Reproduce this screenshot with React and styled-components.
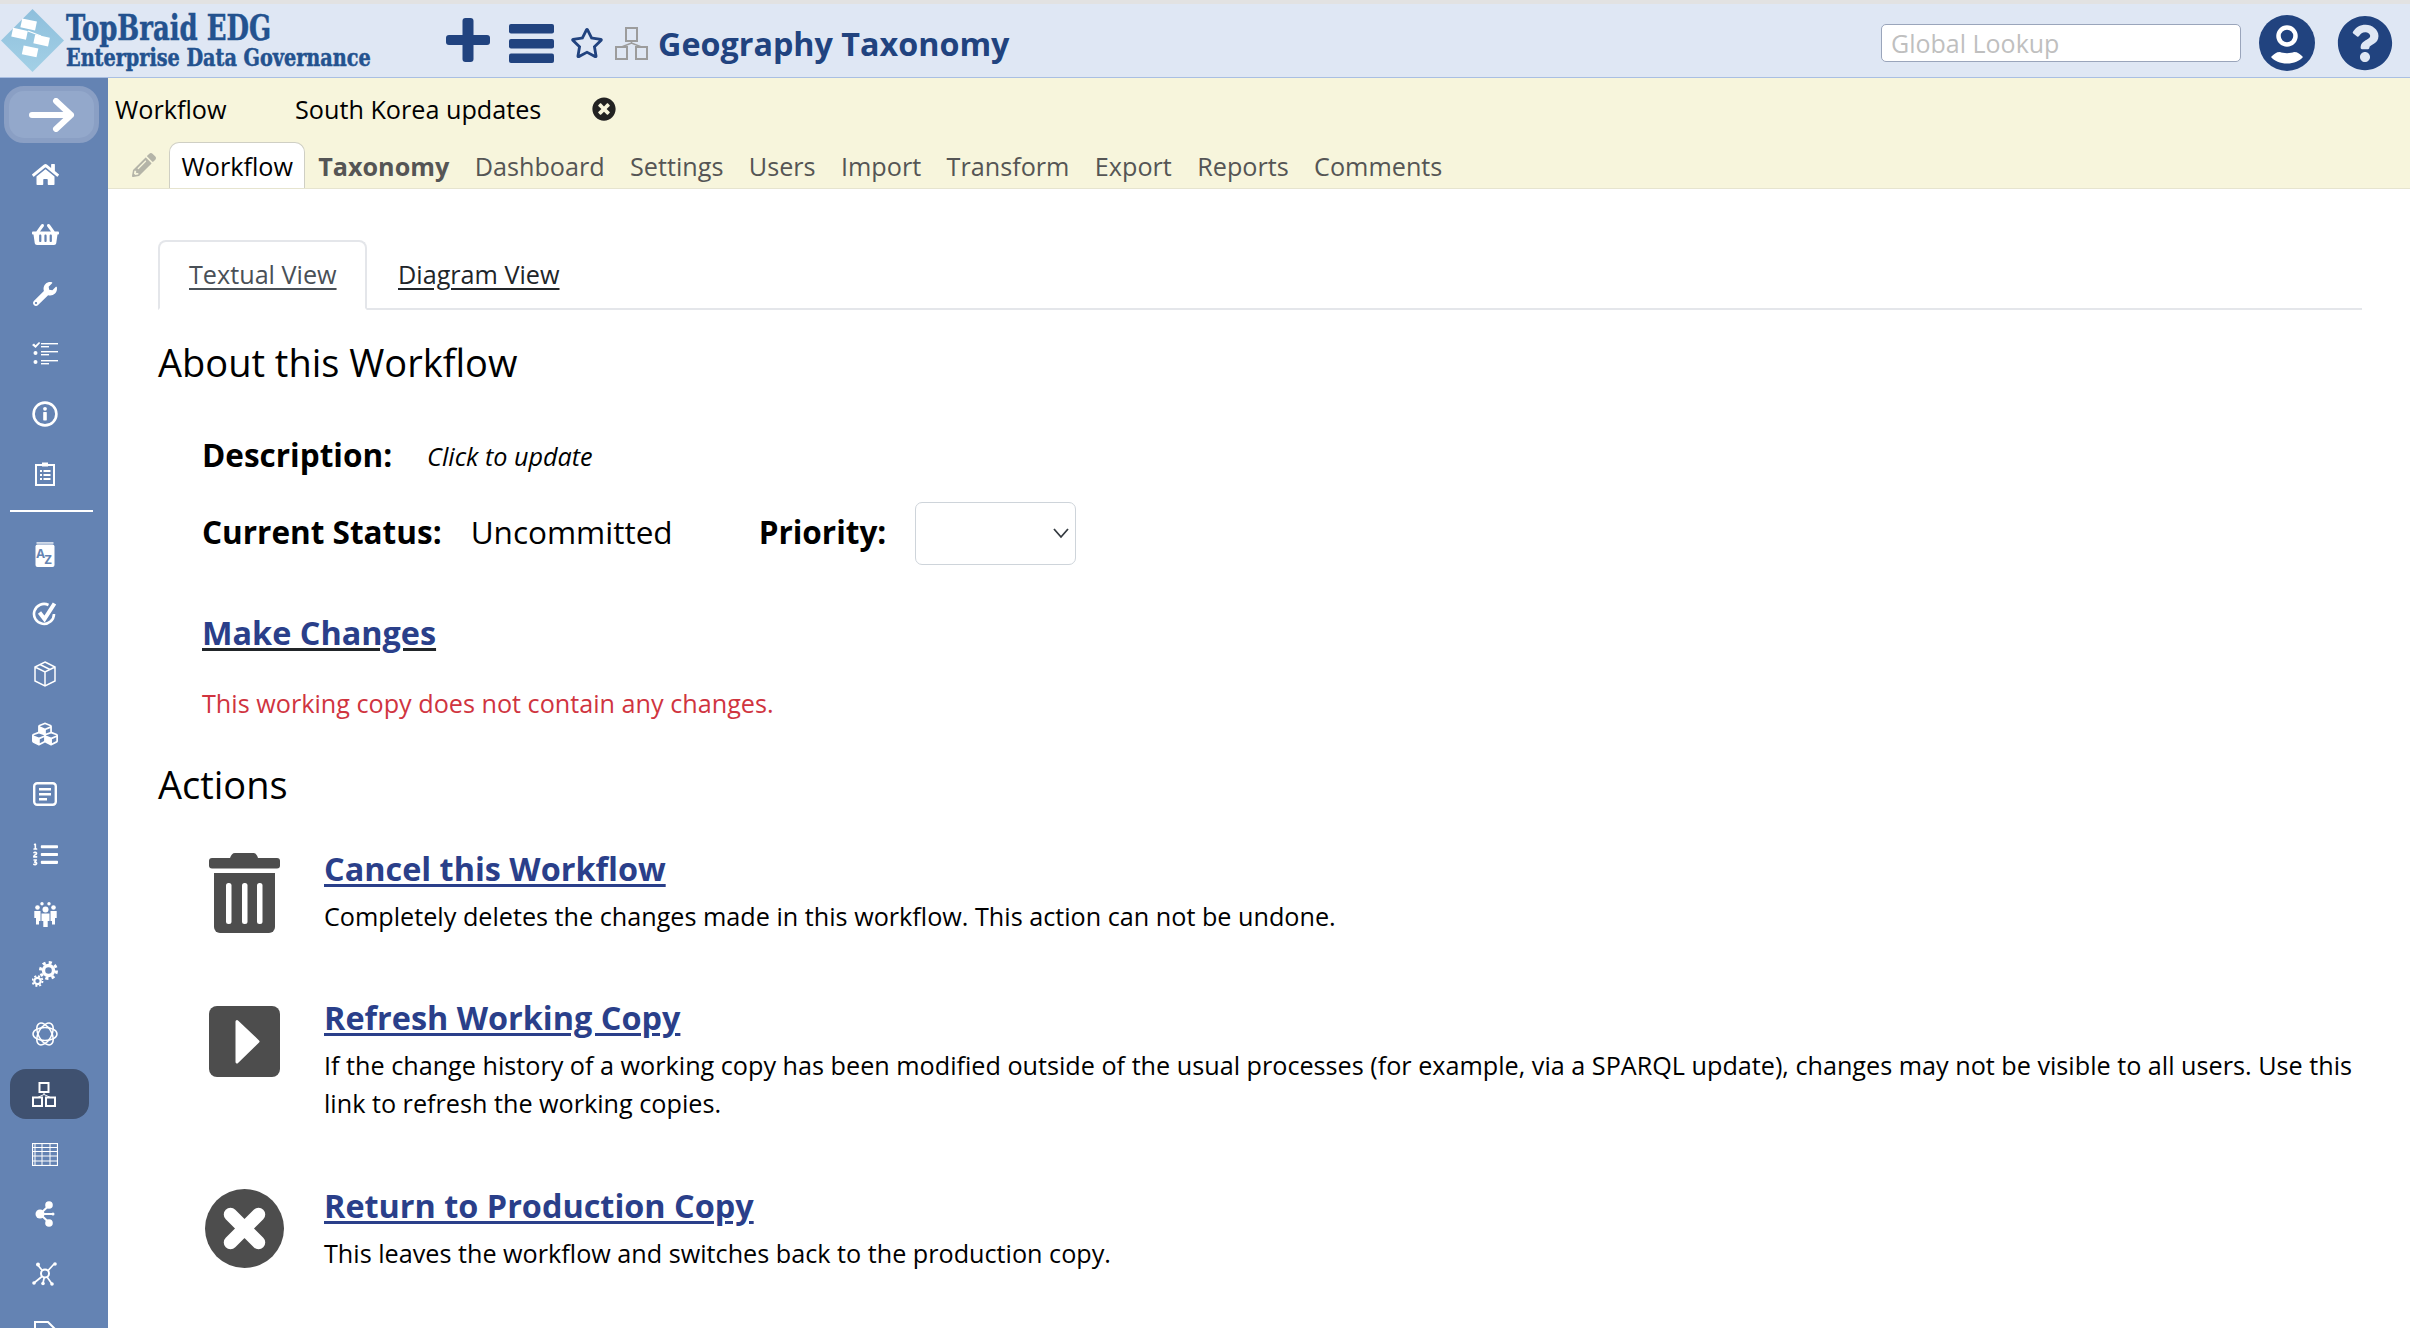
import React from 'react';
import styled, { createGlobalStyle } from 'styled-components';
import { FaHome, FaShoppingBasket, FaWrench, FaCubes, FaListOl, FaRegStar, FaQuestionCircle, FaPencilAlt, FaTimesCircle } from 'react-icons/fa';

const NAVY = '#21437f';

const Global = createGlobalStyle`
  html, body { margin: 0; padding: 0; height: 1328px; overflow: hidden; background: #fff; }
  body { font-family: "Open Sans", "Noto Sans", sans-serif; color: #000; }
  * { box-sizing: border-box; }
`;

const Page = styled.div`
  width: 2410px; height: 1328px; display: flex; flex-direction: column; overflow: hidden;
`;
const TopStrip = styled.div`height: 4px; background: #e2e2e2; flex: none;`;
const Header = styled.header`
  height: 74px; flex: none; display: flex; align-items: center; background: #dfe7f4;
  border-bottom: 1px solid #a9bfe2; padding: 5px 17px 0 1px;
`;
const Logo = styled.div`
  display: flex; align-items: center; width: 445px; flex: none; gap: 2px; margin-top: -5px;
`;
const LogoText = styled.div`
  display: flex; flex-direction: column; font-family: "DejaVu Serif", serif; font-weight: 700; font-stretch: condensed;
  color: #23528f; -webkit-text-stroke: 0.5px #23528f; margin-top: -2px;
`;
const LogoTop = styled.span`font-size: 36px; line-height: 37px; transform-origin: left; transform: scaleX(0.8); white-space: nowrap;`;
const LogoBottom = styled.span`font-size: 24px; line-height: 24px; transform-origin: left; transform: scaleX(0.89); white-space: nowrap;`;
const HeaderTools = styled.div`display: flex; align-items: center;`;
const ToolIcon = styled.span`display: flex; margin: ${p => p.$mt || 0}px ${p => p.$mr}px 0 0; color: ${p => p.$c || NAVY};`;
const Title = styled.h1`
  margin: 0 0 0 10px; font-size: 32.3px; line-height: 44px; font-weight: 700; color: ${NAVY}; white-space: nowrap;
`;
const Spacer = styled.div`flex: 1;`;
const Lookup = styled.input`
  width: 360px; height: 38px; border: 1px solid #9aa5bb; border-radius: 5px; background: #fff;
  font-family: inherit; font-size: 25px; padding: 0 9px; margin-right: 18px; outline: none;
  &::placeholder { color: #bfbfbf; opacity: 1; }
`;
const RoundIcon = styled.span`display: flex; margin-left: ${p => p.$ml || 0}px; color: ${NAVY};`;

const Body = styled.div`flex: 1; display: flex; min-height: 0;`;
const Sidebar = styled.nav`
  width: 108px; flex: none; background: #6483b3; overflow: hidden; padding-top: 8px; color: #fff;
`;
const Toggle = styled.div`
  width: 95px; height: 57px; margin: 0 0 1px 4px; border-radius: 20px; background: #93a8cb; border: 5px solid #8a9fc4;
  display: flex; align-items: center; justify-content: center;
`;
const NavItem = styled.div`
  height: 60px; display: flex; align-items: center; justify-content: center; padding-right: 18px; color: #fff;
`;
const ActiveItem = styled(NavItem)`
  width: 79px; height: 50px; margin: 5px 0 5px 10px; padding: 0 12px 0 0; border-radius: 16px; background: #3f5170;
`;
const NavRule = styled.hr`
  border: 0; height: 2px; background: #fff; margin: 6px 15px 12px 10px;
`;

const Content = styled.div`flex: 1; min-width: 0; display: flex; flex-direction: column;`;
const SubHeader = styled.div`
  height: 111px; flex: none; background: #f7f5dc; border-bottom: 1px solid #e6e4cf; display: flex; flex-direction: column;
`;
const ContextRow = styled.div`
  height: 65px; display: flex; align-items: center; padding: 0 0 3px 7px; font-size: 25.2px;
`;
const ContextName = styled.span`width: 180px;`;
const ContextValue = styled.span`width: 297px;`;
const CloseIcon = styled.span`display: flex; color: #222;`;
const TabRow = styled.div`
  height: 46px; display: flex; align-items: flex-end; padding-left: 24px; font-size: 25.2px; color: #555;
`;
const PencilSlot = styled.span`display: flex; align-self: center; width: 37px; color: #b4b4a8;`;
const ActiveTab = styled.span`
  height: 46px; padding: 0 11.500px; display: flex; align-items: center; color: #000; background: #fff;
  border: 1px solid #cfcfc4; border-bottom: 0; border-radius: 10px 10px 0 0;
`;
const Tab = styled.span`
  height: 45px; padding: 0 12.7px; display: flex; align-items: center; font-weight: ${p => p.$bold ? 700 : 400};
`;

const Main = styled.main`flex: 1; padding: 51px 48px 0 50px; min-height: 0;`;
const ViewTabs = styled.div`display: flex; border-bottom: 2px solid #e4e6ea; height: 70px;`;
const ViewTab = styled.a`
  font-size: 25.2px; height: 70px; display: flex; align-items: center; text-decoration: underline; text-underline-offset: 4px;
  padding: 0 0 3px 29px; color: ${p => p.$active ? '#495057' : '#212529'};
  ${p => p.$active ? 'width: 209px; border: 2px solid #e4e6ea; border-bottom: 2px solid #fff; border-radius: 8px 8px 0 0;' : 'padding-left: 31px;'}
`;
const Heading = styled.h2`
  margin: ${p => p.$mt}px 0 0; font-size: 38px; line-height: 54px; font-weight: 400;
`;
const Details = styled.div`padding-left: ${p => p.$pl}px;`;
const DescRow = styled.div`display: flex; align-items: center; height: 40px; margin-top: 45px;`;
const Label = styled.span`font-size: 31.5px; font-weight: 700; margin-right: ${p => p.$mr}px; white-space: nowrap; position: relative; top: ${p => p.$up ? -2 : 0}px;`;
const Hint = styled.span`font-size: 25.2px; font-style: italic; padding-top: 4px;`;
const StatusRow = styled.div`display: flex; align-items: center; height: 63px; margin-top: 28px;`;
const StatusValue = styled.span`font-size: 31.5px; margin-right: 86px; position: relative; top: -2px;`;
const SelectWrap = styled.span`position: relative; display: block; width: 161px; height: 63px;`;
const Select = styled.select`
  appearance: none; width: 161px; height: 63px; background: #fff; border: 1.5px solid #ced4da; border-radius: 7px;
`;
const Chevron = styled.svg`position: absolute; right: 7px; top: 25px; pointer-events: none;`;
const BigLink = styled.a`
  display: inline-block; font-size: 32.4px; line-height: 48px; font-weight: 700; color: #2a3f8a; text-decoration: underline;
  text-decoration-color: ${p => p.$line || '#2a3f8a'}; text-decoration-thickness: 2.5px; text-underline-offset: 3px; white-space: nowrap;
`;
const MakeBlock = styled.div`margin-top: 43px;`;
const ErrorText = styled.p`margin: 28px 0 0; font-size: 25.2px; line-height: 38px; color: #d0343f;`;
const ActionRow = styled.div`display: flex; margin-top: ${p => p.$mt}px;`;
const ActionIcon = styled.div`
  width: 82px; flex: none; margin: ${p => p.$top}px 39px 0 0; display: flex; justify-content: center; color: #4d4d4d;
`;
const ActionBody = styled.div`flex: 1; min-width: 0;`;
const ActionDesc = styled.p`margin: 5px 0 0; font-size: 25.2px; line-height: 38px;`;

const stroke = { fill: 'none', stroke: 'currentColor' };

const I = {
  arrow: <svg width="46" height="34" viewBox="0 0 46 34"><path d="M3 17H42M27 3L42 17L27 31" fill="none" stroke="#fff" strokeWidth="6" strokeLinecap="round" strokeLinejoin="round"/></svg>,
  tasks: <svg width="26" height="24" viewBox="0 0 26 24" fill="currentColor"><path d="M0 3l2-1.500 1.600 1.800L7 0l1.200 1L3.600 6z"/><rect x="9" y="1" width="17" height="1.400"/><rect x="9" y="4" width="8" height="1.400"/><circle cx="3.500" cy="11" r="2"/><rect x="9" y="9" width="17" height="1.400"/><rect x="9" y="12" width="8" height="1.400"/><circle cx="3.500" cy="20" r="2"/><rect x="9" y="18" width="17" height="1.400"/><rect x="9" y="21" width="8" height="1.400"/></svg>,
  info: <svg width="26" height="26" viewBox="0 0 26 26"><circle cx="13" cy="13" r="11.400" {...stroke} strokeWidth="2.600"/><circle cx="13" cy="7.800" r="1.900" fill="currentColor"/><rect x="11.200" y="11" width="3.600" height="8.400" rx="0.600" fill="currentColor"/></svg>,
  clipboard: <svg width="20" height="24" viewBox="0 0 20 24"><rect x="1" y="3" width="18" height="20" {...stroke} strokeWidth="2"/><rect x="7" y="0.500" width="6" height="4" fill="currentColor"/><g fill="currentColor"><rect x="5" y="8" width="2" height="2"/><rect x="5" y="12" width="2" height="2"/><rect x="5" y="16" width="2" height="2"/><rect x="8.500" y="8" width="7" height="2"/><rect x="8.500" y="12" width="7" height="2"/><rect x="8.500" y="16" width="7" height="2"/></g></svg>,
  az: <svg width="20" height="25" viewBox="0 0 20 25"><rect x="0.500" y="2.500" width="19" height="22.500" rx="2" fill="#fff"/><rect x="1.500" y="0.300" width="17" height="1.300" fill="#fff"/><text x="1.200" y="15.500" fontFamily="Open Sans" fontWeight="700" fontSize="12.500" fill="#6483b3">A</text><text x="9.500" y="21.500" fontFamily="Open Sans" fontWeight="700" fontSize="12.500" fill="#6483b3">Z</text></svg>,
  check: <svg width="26" height="26" viewBox="0 0 26 26"><path d="M22 13A10 10 0 1 1 16.500 4" {...stroke} strokeWidth="2.600"/><path d="M7.500 11.500l5 6.500L22.500 2.500" {...stroke} strokeWidth="4"/></svg>,
  box: <svg width="22" height="26" viewBox="0 0 22 26"><path d="M11 1l10 5v14l-10 5-10-5V6zM1 6l10 5 10-5M11 11v14M6 3.500l10 5" {...stroke} strokeWidth="1.500"/></svg>,
  listBox: <svg width="24" height="24" viewBox="0 0 24 24"><rect x="1.200" y="1.200" width="21.600" height="21.600" rx="3" {...stroke} strokeWidth="2.400"/><g fill="currentColor"><rect x="6" y="6" width="12" height="2.500"/><rect x="6" y="11" width="12" height="2.500"/><rect x="6" y="16" width="8" height="2.500"/></g></svg>,
  people: <svg width="23" height="25" viewBox="0 0 23 25" fill="currentColor"><circle cx="11.500" cy="7.500" r="3"/><path d="M7.500 11.500h8v7.500h-1.800v6h-4.400v-6H7.500z"/><circle cx="8" cy="1.800" r="1.700"/><circle cx="15" cy="1.800" r="1.700"/><circle cx="3.500" cy="5.500" r="2.300"/><circle cx="19.500" cy="5.500" r="2.300"/><path d="M0.300 9h6.200v10H5v3.500H2V16H0.300zM16.500 9h6.200v7H21v6.500h-3V19h-1.500z"/></svg>,
  gears: <svg width="26" height="26" viewBox="0 0 26 26"><circle cx="16.500" cy="9.500" r="5" {...stroke} strokeWidth="3.400"/><circle cx="16.500" cy="9.500" r="8" {...stroke} strokeWidth="3" strokeDasharray="3.140 3.140"/><circle cx="5.500" cy="20" r="3.200" {...stroke} strokeWidth="2.200"/><circle cx="5.500" cy="20" r="5" {...stroke} strokeWidth="1.800" strokeDasharray="2 1.930"/></svg>,
  atom: <svg width="26" height="26" viewBox="0 0 26 26"><g {...stroke} strokeWidth="1.500"><ellipse cx="13" cy="13" rx="12" ry="6.500"/><ellipse cx="13" cy="13" rx="12" ry="6.500" transform="rotate(60 13 13)"/><ellipse cx="13" cy="13" rx="12" ry="6.500" transform="rotate(-60 13 13)"/></g></svg>,
  tree: <svg width="24" height="25" viewBox="0 0 24 25"><g {...stroke} strokeWidth="2"><rect x="7.500" y="1" width="9" height="9"/><rect x="1" y="15.500" width="9" height="8.500"/><rect x="14" y="15.500" width="9" height="8.500"/></g><path d="M12 10v2.500M5.500 15.500l6.500-3 6.500 3" {...stroke} strokeWidth="1"/></svg>,
  table: <svg width="26" height="23" viewBox="0 0 26 23"><rect x="0.500" y="0.500" width="25" height="22" {...stroke} strokeWidth="1.200"/><path d="M0 4.500h26M0 8.500h26M0 13h26M0 18h26M3 0v23M10 0v23M18 0v23" {...stroke} strokeWidth="1"/></svg>,
  share: <svg width="20" height="26" viewBox="0 0 20 26"><path d="M5 13L14 4.500M5 13h13M5 13l9 8.500" {...stroke} strokeWidth="2"/><circle cx="5" cy="13" r="4.500" fill="currentColor"/><circle cx="14" cy="4" r="3.800" fill="currentColor"/><circle cx="14" cy="22" r="3.800" fill="currentColor"/><circle cx="18" cy="13" r="1.500" fill="currentColor"/></svg>,
  network: <svg width="26" height="24" viewBox="0 0 26 24"><path d="M5 2l8 10M22 2l-9 10M2 21l11-9M11 21l2-9M20 22l-7-10" {...stroke} strokeWidth="1.700"/><circle cx="13" cy="11.500" r="4" fill="#6483b3" stroke="#fff" strokeWidth="2"/><g fill="currentColor"><circle cx="6" cy="2.500" r="2"/><circle cx="23" cy="2" r="1.800"/><circle cx="2" cy="21" r="1.800"/><circle cx="11" cy="21.500" r="1.800"/><circle cx="20" cy="22" r="1.800"/></g></svg>,
  doc: <svg width="22" height="26" viewBox="0 0 22 26"><path d="M1 1h13l7 7v17H1z" {...stroke} strokeWidth="2"/></svg>,
};

const nav1 = [<FaHome size={27} />, <FaShoppingBasket size={27} />, <FaWrench size={24} />, I.tasks, I.info, I.clipboard];
const nav2 = [I.az, I.check, I.box, <FaCubes size={26} />, I.listBox, <FaListOl size={25} />, I.people, I.gears, I.atom];
const nav3 = [I.table, I.share, I.network, I.doc];

const LogoMark = () => (
  <svg width="63" height="63" viewBox="0 0 63 63">
    <defs><linearGradient id="lg" x1="0" y1="0" x2="0" y2="1"><stop offset="0" stopColor="#8ebfdc"/><stop offset="1" stopColor="#a3d0e6"/></linearGradient></defs>
    <polygon points="31.500,0 63,31.500 31.500,63 0,31.500" fill="url(#lg)"/>
    <g fill="#fff" transform="rotate(12 31 31)"><rect x="17" y="12" width="15" height="9"/><rect x="10" y="23" width="15" height="9"/><rect x="33" y="25" width="15" height="9"/><rect x="24" y="38" width="15" height="9"/></g>
    <path d="M27 22L40 27" stroke="#fff" strokeWidth="1.200"/>
  </svg>
);
const Plus = () => (
  <svg width="44" height="44" viewBox="0 0 44 44" fill={NAVY}><rect x="16.500" y="0" width="11" height="44" rx="3"/><rect x="0" y="17" width="44" height="10" rx="3"/></svg>
);
const Bars = () => (
  <svg width="45" height="39" viewBox="0 0 45 39" fill={NAVY}><rect width="45" height="9.500" rx="2"/><rect y="15" width="45" height="9.500" rx="2"/><rect y="29.500" width="45" height="9.500" rx="2"/></svg>
);
const GrayTree = () => (
  <svg width="33" height="33" viewBox="0 0 33 33" fill="none" stroke="#9c9c9c" strokeWidth="2"><rect x="11" y="1" width="11" height="13"/><rect x="1" y="20" width="11" height="12"/><rect x="21" y="20" width="11" height="12"/><path d="M16.500 14v2M6.500 20l10-4 10 4" strokeWidth="1.500"/></svg>
);
const UserCircle = () => (
  <svg width="56" height="56" viewBox="0 0 56 56"><circle cx="28" cy="28" r="28" fill={NAVY}/><circle cx="28" cy="21" r="8.500" fill="none" stroke="#fff" strokeWidth="4.500"/><path d="M12 42c3-3 5-5 9-5 2.500 1.500 11.500 1.500 14 0 4 0 6 2 9 5-3.500 4-9 6.500-16 6.500S15.500 46 12 42z" fill="#fff"/></svg>
);
const Trash = () => (
  <svg width="71" height="81" viewBox="0 0 71 81" fill="currentColor">
    <path d="M21 5c1-3 2.500-5 5-5h18c2.500 0 4 2 5 5z"/><rect y="5" width="71" height="10.500" rx="3"/>
    <path d="M5 20h61v54a6 6 0 0 1-6 6H11a6 6 0 0 1-6-6z"/>
    <g fill="#fff"><rect x="17" y="30" width="5.500" height="41" rx="2.500"/><rect x="33" y="30" width="5.500" height="41" rx="2.500"/><rect x="48" y="30" width="5.500" height="41" rx="2.500"/></g>
  </svg>
);
const PlaySquare = () => (
  <svg width="71" height="71" viewBox="0 0 71 71"><rect width="71" height="71" rx="8" fill="currentColor"/><path d="M28 15.500L49 35.500L28 56z" fill="#fff" stroke="#fff" strokeWidth="3" strokeLinejoin="round"/></svg>
);
const CrossCircle = () => (
  <svg width="79" height="79" viewBox="0 0 79 79"><circle cx="39.500" cy="39.500" r="39.500" fill="currentColor"/><path d="M25.500 25.500L53.500 53.500M53.500 25.500L25.500 53.500" stroke="#fff" strokeWidth="13.500" strokeLinecap="round"/></svg>
);

export default function App() {
  return (
    <Page>
      <Global />
      <TopStrip />
      <Header>
        <Logo>
          <LogoMark />
          <LogoText>
            <LogoTop>TopBraid EDG</LogoTop>
            <LogoBottom>Enterprise Data Governance</LogoBottom>
          </LogoText>
        </Logo>
        <HeaderTools>
          <ToolIcon $mr={19} $mt={-6}><Plus /></ToolIcon>
          <ToolIcon $mr={16}><Bars /></ToolIcon>
          <ToolIcon $mr={11}><FaRegStar size={34} /></ToolIcon>
          <ToolIcon $mr={0}><GrayTree /></ToolIcon>
          <Title>Geography Taxonomy</Title>
        </HeaderTools>
        <Spacer />
        <Lookup placeholder="Global Lookup" readOnly />
        <RoundIcon><UserCircle /></RoundIcon>
        <RoundIcon $ml={22}><FaQuestionCircle size={56} /></RoundIcon>
      </Header>
      <Body>
        <Sidebar>
          <Toggle>{I.arrow}</Toggle>
          {nav1.map((n, i) => <NavItem key={i}>{n}</NavItem>)}
          <NavRule />
          {nav2.map((n, i) => <NavItem key={i}>{n}</NavItem>)}
          <ActiveItem>{I.tree}</ActiveItem>
          {nav3.map((n, i) => <NavItem key={i}>{n}</NavItem>)}
        </Sidebar>
        <Content>
          <SubHeader>
            <ContextRow>
              <ContextName>Workflow</ContextName>
              <ContextValue>South Korea updates</ContextValue>
              <CloseIcon><FaTimesCircle size={24} /></CloseIcon>
            </ContextRow>
            <TabRow>
              <PencilSlot><FaPencilAlt size={24} /></PencilSlot>
              <ActiveTab>Workflow</ActiveTab>
              <Tab $bold>Taxonomy</Tab>
              <Tab>Dashboard</Tab>
              <Tab>Settings</Tab>
              <Tab>Users</Tab>
              <Tab>Import</Tab>
              <Tab>Transform</Tab>
              <Tab>Export</Tab>
              <Tab>Reports</Tab>
              <Tab>Comments</Tab>
            </TabRow>
          </SubHeader>
          <Main>
            <ViewTabs>
              <ViewTab $active>Textual View</ViewTab>
              <ViewTab>Diagram View</ViewTab>
            </ViewTabs>
            <Heading $mt={25}>About this Workflow</Heading>
            <Details $pl={44}>
              <DescRow><Label $mr={35}>Description:</Label><Hint>Click to update</Hint></DescRow>
              <StatusRow>
                <Label $up $mr={29}>Current Status:</Label>
                <StatusValue>Uncommitted</StatusValue>
                <Label $up $mr={29}>Priority:</Label>
                <SelectWrap>
                  <Select aria-label="Priority" />
                  <Chevron width="16" height="12" viewBox="0 0 16 12"><path d="M1 2l7 8 7-8" fill="none" stroke="#343a40" strokeWidth="1.800"/></Chevron>
                </SelectWrap>
              </StatusRow>
              <MakeBlock><BigLink $line="#212529">Make Changes</BigLink></MakeBlock>
              <ErrorText>This working copy does not contain any changes.</ErrorText>
            </Details>
            <Heading $mt={35}>Actions</Heading>
            <Details $pl={45}>
              <ActionRow $mt={33}>
                <ActionIcon $top={9}><Trash /></ActionIcon>
                <ActionBody>
                  <BigLink>Cancel this Workflow</BigLink>
                  <ActionDesc>Completely deletes the changes made in this workflow. This action can not be undone.</ActionDesc>
                </ActionBody>
              </ActionRow>
              <ActionRow $mt={58}>
                <ActionIcon $top={13}><PlaySquare /></ActionIcon>
                <ActionBody>
                  <BigLink>Refresh Working Copy</BigLink>
                  <ActionDesc>If the change history of a working copy has been modified outside of the usual processes (for example, via a SPARQL update), changes may not be visible to all users. Use this link to refresh the working copies.</ActionDesc>
                </ActionBody>
              </ActionRow>
              <ActionRow $mt={59}>
                <ActionIcon $top={8}><CrossCircle /></ActionIcon>
                <ActionBody>
                  <BigLink>Return to Production Copy</BigLink>
                  <ActionDesc>This leaves the workflow and switches back to the production copy.</ActionDesc>
                </ActionBody>
              </ActionRow>
            </Details>
          </Main>
        </Content>
      </Body>
    </Page>
  );
}
